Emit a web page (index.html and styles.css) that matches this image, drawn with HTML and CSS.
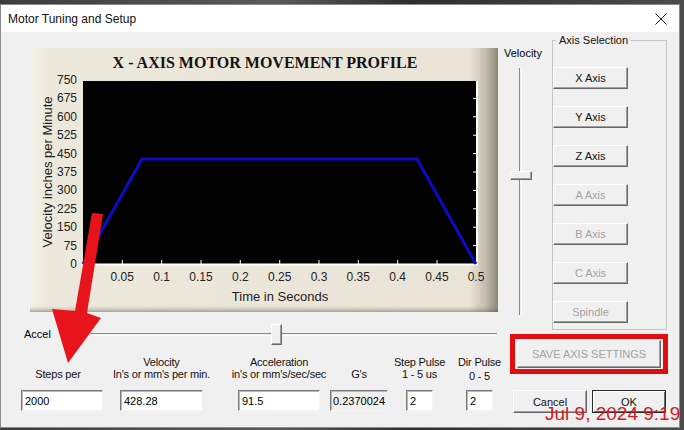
FILE: index.html
```html
<!DOCTYPE html>
<html>
<head>
<meta charset="utf-8">
<link rel="stylesheet" href="styles.css">
</head>
<body>
<div class="screen">
  <div class="dialog">
    <div class="titlebar">
      <span class="title">Motor Tuning and Setup</span>
      <svg class="close" width="12" height="12" viewBox="0 0 12 12"><path d="M0.5 0.5 L11.5 11.5 M11.5 0.5 L0.5 11.5" stroke="#1e1e1e" stroke-width="1" fill="none"/></svg>
    </div>
    <div class="content">
      <div class="left">
        <div class="chart">
          <svg width="468" height="264" viewBox="0 0 468 264">
            <text x="235" y="20" class="ch-title" text-anchor="middle">X - AXIS MOTOR MOVEMENT PROFILE</text>
            <rect x="53" y="33" width="394" height="184" fill="#020202"/>
            <g stroke="#ffffff" stroke-width="2" fill="none">
              <path d="M53 216.5 H448"/>
              <path d="M447 33 V217"/>
            </g>
            <g stroke="#ffffff" stroke-width="1" fill="none">
              <path d="M92.3 216 V212 M131.7 216 V212 M171 216 V212 M210.3 216 V212 M249.7 216 V212 M289 216 V212 M328.3 216 V212 M367.7 216 V212 M407 216 V212"/>
              <path d="M447 197.6 H443 M447 179.2 H443 M447 160.8 H443 M447 142.4 H443 M447 124 H443 M447 105.6 H443 M447 87.2 H443 M447 68.8 H443 M447 50.4 H443"/>
            </g>
            <polyline points="53,216 112,111 387,111 446,216" fill="none" stroke="#0c0cc4" stroke-width="3" stroke-linejoin="miter"/>
            <g class="ylab" text-anchor="end">
              <text x="47" y="36">750</text>
              <text x="47" y="54.4">675</text>
              <text x="47" y="72.8">600</text>
              <text x="47" y="91.2">525</text>
              <text x="47" y="109.6">450</text>
              <text x="47" y="128">375</text>
              <text x="47" y="146.4">300</text>
              <text x="47" y="164.8">225</text>
              <text x="47" y="183.2">150</text>
              <text x="47" y="201.6">75</text>
              <text x="47" y="220">0</text>
            </g>
            <g class="xlab" text-anchor="middle">
              <text x="92.3" y="233">0.05</text>
              <text x="131.7" y="233">0.1</text>
              <text x="171" y="233">0.15</text>
              <text x="210.3" y="233">0.2</text>
              <text x="249.7" y="233">0.25</text>
              <text x="289" y="233">0.3</text>
              <text x="328.3" y="233">0.35</text>
              <text x="367.7" y="233">0.4</text>
              <text x="407" y="233">0.45</text>
              <text x="446" y="233">0.5</text>
            </g>
            <text x="250" y="253" class="axtitle" text-anchor="middle">Time in Seconds</text>
            <text class="axtitle" text-anchor="middle" transform="translate(22 124) rotate(-90)">Velocity inches per Minute</text>
          </svg>
        </div>
        <div class="accel-row">
          <span class="accel-label">Accel</span>
          <div class="hslider">
            <div class="htrack"></div>
            <div class="hthumb" style="left:181px"></div>
          </div>
        </div>
        <div class="fields">
          <div class="field f1"><div class="lbl lbl-steps"><span>Steps per</span></div><input class="inp" value="2000"></div>
          <div class="field f2"><div class="lbl"><span>Velocity</span><span>In's or mm's per min.</span></div><input class="inp" value="428.28"></div>
          <div class="field f3"><div class="lbl"><span>Acceleration</span><span>in's or mm's/sec/sec</span></div><input class="inp" value="91.5"></div>
          <div class="field f4"><div class="lbl"><span>G's</span></div><input class="inp ro" value="0.2370024" readonly></div>
          <div class="field f5"><div class="lbl"><span>Step Pulse</span><span>1 - 5 us</span></div><input class="inp" value="2"></div>
          <div class="field f6"><div class="lbl"><span>Dir Pulse</span><span class="low">0 - 5</span></div><input class="inp" value="2"></div>
        </div>
      </div>
      <div class="vel">
        <div class="vel-label">Velocity</div>
        <div class="vslider">
          <div class="vtrack"></div>
          <div class="vthumb" style="top:103px"></div>
        </div>
      </div>
      <fieldset class="axis-group">
        <legend>Axis Selection</legend>
        <div class="axis-list">
          <button class="btn axis">X Axis</button>
          <button class="btn axis">Y Axis</button>
          <button class="btn axis">Z Axis</button>
          <button class="btn axis" disabled>A Axis</button>
          <button class="btn axis" disabled>B Axis</button>
          <button class="btn axis" disabled>C Axis</button>
          <button class="btn axis" disabled>Spindle</button>
        </div>
      </fieldset>
      <div class="bottom-right">
        <div class="save-box"><button class="btn save" disabled>SAVE AXIS SETTINGS</button></div>
        <div class="dlg-buttons">
          <button class="btn dlg">Cancel</button>
          <button class="btn dlg ok">OK</button>
        </div>
      </div>
    </div>
  </div>
  <svg class="arrow" width="684" height="430" viewBox="0 0 684 430">
    <polygon points="92,213 103,214 87,313 101,318 68,363 52,309 75,311" fill="#e8141b"/>
  </svg>
  <div class="stamp">Jul 9, 2024 9:19</div>
</div>
</body>
</html>
```

FILE: styles.css
```css
html, body {
  margin: 0;
  padding: 0;
}

body {
  font-family: "Liberation Sans", Arial, sans-serif;
  font-size: 11px;
  color: #000;
}

.screen {
  position: relative;
  width: 684px;
  height: 430px;
  overflow: hidden;
  box-sizing: border-box;
  padding-top: 4px;
  background: linear-gradient(to right, #3c3c3c 0, #5a5a5a 40%, #2e2e2e 60%, #4c4c4c 100%);
}

.dialog {
  width: 680px;
  height: 424px;
  box-sizing: border-box;
  border: 1px solid #8c8c8c;
  background: #f0f0f0;
  display: flex;
  flex-direction: column;
}

.titlebar {
  height: 27px;
  flex: none;
  background: #ffffff;
  display: flex;
  align-items: center;
  justify-content: space-between;
  padding: 0 12px 0 7px;
}

.title {
  font-size: 12px;
  color: #111;
}

.close {
  display: block;
}

.content {
  flex: 1;
  display: grid;
  grid-template-columns: 500px 48px 130px;
  grid-template-rows: 298px auto;
}

.left {
  grid-column: 1;
  grid-row: 1 / 3;
  display: flex;
  flex-direction: column;
}

.chart {
  margin: 16px 0 0 29px;
  width: 468px;
  height: 264px;
  background: linear-gradient(to right, #f6f3ec 0, #ece8dc 18px, #e9e4d6 440px, #c2bcae 456px, #8f8878 468px);
  box-shadow: inset 0 -5px 4px -3px rgba(90, 84, 70, 0.55);
}

.chart svg {
  display: block;
}

.ch-title {
  font-family: "Liberation Serif", "Times New Roman", serif;
  font-weight: bold;
  font-size: 16px;
  fill: #141414;
}

.ylab text, .xlab text {
  font-family: "Liberation Sans", Arial, sans-serif;
  font-size: 12px;
  fill: #222;
}

.axtitle {
  font-family: "Liberation Sans", Arial, sans-serif;
  font-size: 13px;
  fill: #1c1c1c;
}

.accel-row {
  margin-top: 10px;
  height: 23px;
  display: flex;
  align-items: center;
}

.accel-label {
  margin-left: 23px;
  width: 66px;
}

.hslider {
  position: relative;
  width: 407px;
  height: 23px;
}

.htrack {
  margin-top: 11px;
  height: 1px;
  border-top: 1px solid #8a8a8a;
  border-bottom: 1px solid #ffffff;
}

.hthumb {
  position: absolute;
  top: 2px;
  width: 9px;
  height: 19px;
  background: #f0f0f0;
  border: 1px solid;
  border-color: #ffffff #6a6a6a #6a6a6a #ffffff;
  box-shadow: inset -1px -1px #a0a0a0;
}

.fields {
  margin-top: 9px;
  display: flex;
  align-items: flex-end;
  padding-left: 20px;
}

.field {
  display: flex;
  flex-direction: column;
  align-items: center;
}

.lbl {
  height: 26px;
  margin-bottom: 10px;
  display: flex;
  flex-direction: column;
  justify-content: flex-end;
  align-items: center;
  white-space: nowrap;
  line-height: 12px;
  letter-spacing: -0.2px;
  color: #111;
}

.lbl-steps {
  padding-right: 8px;
}

.low {
  position: relative;
  top: 2px;
}

.f1 { width: 82px; }
.f2 { width: 83px; margin-left: 17px; }
.f3 { width: 82px; margin-left: 35px; }
.f4 { width: 58px; margin-left: 10px; }
.f5 { width: 27px; margin-left: 18px; }
.f6 { width: 27px; margin-left: 33px; }

.inp {
  width: 100%;
  height: 21px;
  box-sizing: border-box;
  margin: 0;
  padding: 0 0 0 3px;
  font-family: "Liberation Sans", Arial, sans-serif;
  font-size: 11px;
  color: #000;
  background: #ffffff;
  border: 1px solid;
  border-color: #7a7a7a #f4f4f4 #f4f4f4 #7a7a7a;
  box-shadow: inset 1px 1px #b8b8b8;
  outline: none;
}

.inp.ro {
  background: #f0f0f0;
  padding-left: 2px;
}

.vel {
  grid-column: 2;
  grid-row: 1;
  padding-left: 3px;
}

.vel-label {
  margin-top: 15px;
  line-height: 13px;
}

.vslider {
  position: relative;
  margin: 8px 0 0 6px;
  width: 22px;
  height: 247px;
}

.vtrack {
  margin-left: 9px;
  width: 1px;
  height: 100%;
  border-left: 1px solid #8a8a8a;
  border-right: 1px solid #ffffff;
}

.vthumb {
  position: absolute;
  left: 0;
  width: 20px;
  height: 7px;
  background: #f0f0f0;
  border: 1px solid;
  border-color: #ffffff #6a6a6a #6a6a6a #ffffff;
  box-shadow: inset -1px -1px #a0a0a0;
}

.axis-group {
  grid-column: 3;
  grid-row: 1;
  align-self: start;
  margin: 2px 0 0 3px;
  width: 115px;
  box-sizing: border-box;
  padding: 0 0 6px 0;
  border: 1px solid #c4c4c4;
  min-width: 0;
}

.axis-group legend {
  margin-left: 3px;
  padding: 0 3px;
  font-size: 11px;
  line-height: 13px;
  color: #111;
}

.axis-list {
  display: flex;
  flex-direction: column;
  gap: 17px;
  padding-top: 20px;
}

.btn {
  margin: 0;
  padding: 0;
  font-family: "Liberation Sans", Arial, sans-serif;
  font-size: 11px;
  color: #111;
  background: #f0f0f0;
  border: 1px solid;
  border-color: #ffffff #666666 #666666 #ffffff;
  box-shadow: inset -1px -1px #a0a0a0;
  box-sizing: border-box;
}

.btn:disabled {
  color: #a3a3a3;
}

.axis {
  width: 75px;
  height: 22px;
}

.bottom-right {
  grid-column: 2 / 4;
  grid-row: 2;
  padding-left: 9px;
}

.save-box {
  margin-top: 4px;
  width: 158px;
  height: 40px;
  box-sizing: border-box;
  border: 5px solid #e20d10;
  padding: 1px 2px;
}

.save {
  width: 100%;
  height: 100%;
}

.dlg-buttons {
  margin-top: 16px;
  padding-left: 3px;
  display: flex;
  gap: 5px;
}

.dlg {
  width: 74px;
  height: 23px;
}

.ok {
  border-color: #2a2a2a;
  box-shadow: inset 1px 1px #ffffff, inset -1px -1px #6a6a6a;
}

.arrow {
  position: absolute;
  left: 0;
  top: 0;
  pointer-events: none;
}

.stamp {
  position: absolute;
  left: 545px;
  top: 404px;
  font-family: "Liberation Sans", Arial, sans-serif;
  font-size: 19px;
  line-height: 1;
  color: #d41a1e;
  white-space: nowrap;
}
```
